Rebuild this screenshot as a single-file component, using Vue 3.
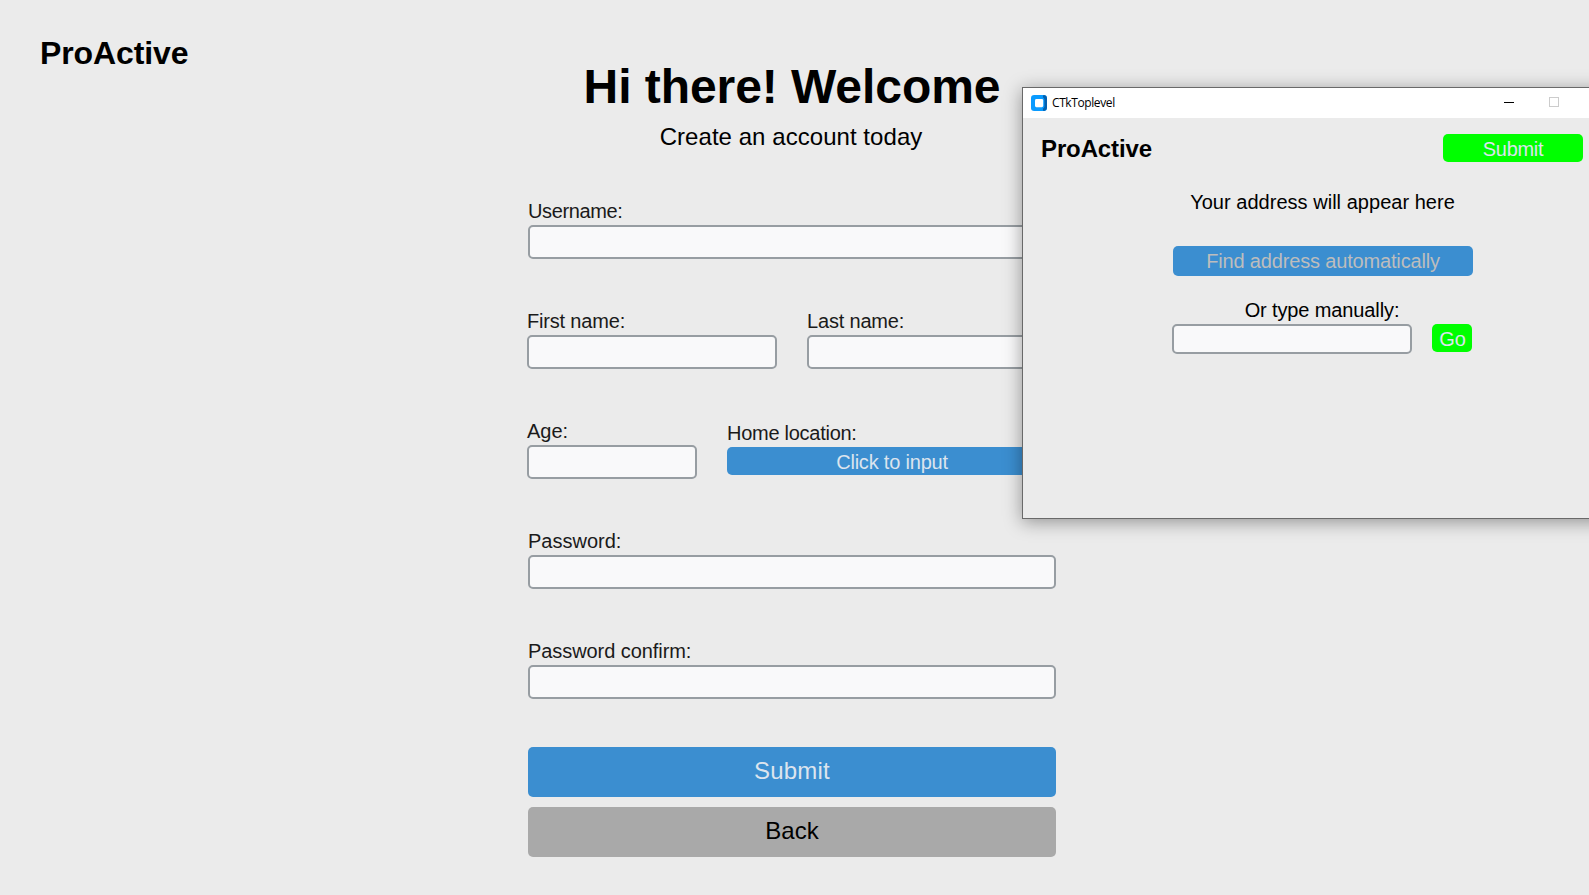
<script setup>
import { ref } from 'vue'

const form = ref({ username: '', first: '', last: '', age: '', password: '', confirm: '' })
const address = ref('')
</script>

<template>
  <div class="app">
    <h2 class="brand">ProActive</h2>

    <main class="panel">
      <h1 class="title">Hi there! Welcome</h1>
      <p class="subtitle">Create an account today</p>

      <form class="form" @submit.prevent>
        <label class="field inset"><span class="label tightest">Username:</span><input v-model="form.username" class="input" type="text" /></label>
        <div class="row">
          <label class="field half"><span class="label tight">First name:</span><input v-model="form.first" class="input" type="text" /></label>
          <label class="field half"><span class="label tight">Last name:</span><input v-model="form.last" class="input" type="text" /></label>
        </div>
        <div class="row">
          <label class="field age"><span class="label">Age:</span><input v-model="form.age" class="input" type="text" /></label>
          <div class="field home">
            <span class="label tighter">Home location:</span>
            <button class="btn blue click" type="button">Click to input</button>
          </div>
        </div>
        <label class="field inset"><span class="label">Password:</span><input v-model="form.password" class="input" type="password" /></label>
        <label class="field inset"><span class="label confirm">Password confirm:</span><input v-model="form.confirm" class="input" type="password" /></label>
        <div class="actions">
          <button class="btn blue large wide" type="submit">Submit</button>
          <button class="btn grey large" type="button">Back</button>
        </div>
      </form>
    </main>

    <section class="dialog">
      <header class="titlebar">
        <svg class="logo" width="16" height="16" viewBox="0 0 16 16">
          <rect width="16" height="16" rx="3.2" fill="#0a9bff" />
          <path d="M12.4 0C14.6 0 16 1.5 16 3.5V12.5C16 14.5 14.6 16 12.4 16L11.8 14L13.4 12V4L11.8 2Z" fill="#0560ae" />
          <rect x="4" y="4" width="8.2" height="8.2" rx="1.4" fill="#fff" />
        </svg>
        <span class="caption">CTkToplevel</span>
        <svg class="controls" width="55" height="10" viewBox="0 0 55 10">
          <rect x="0" y="5" width="10" height="1" fill="#000" />
          <rect x="45.5" y="0.5" width="9" height="9" fill="none" stroke="#ccc" />
        </svg>
      </header>
      <div class="content">
        <div class="top">
          <h3 class="minibrand">ProActive</h3>
          <button class="btn green submit" type="button">Submit</button>
        </div>
        <p class="message">Your address will appear here</p>
        <button class="btn blue find" type="button">Find address automatically</button>
        <label class="manual" for="address">Or type manually:</label>
        <div class="lookup">
          <input id="address" v-model="address" class="input" type="text" />
          <button class="btn green go" type="button">Go</button>
        </div>
      </div>
    </section>
  </div>
</template>

<style>
body {
  margin: 0;
  background: #ebebeb;
}
</style>

<style scoped>
.app {
  position: relative;
  width: 100%;
  height: 895px;
  overflow: hidden;
  background: #ebebeb;
  color: #000;
  font-family: "Liberation Sans", Arial, sans-serif;
  font-size: 20px;
  white-space: nowrap;
}
.app * {
  box-sizing: border-box;
}
h1, h2, h3, p {
  margin: 0;
}
.brand {
  position: absolute;
  left: 40px;
  top: 33px;
  font-size: 32px;
  line-height: 40px;
  letter-spacing: -0.1px;
}
.panel {
  display: flex;
  flex-direction: column;
  width: 530px;
  margin-left: 527px;
  padding-top: 57px;
}
.title {
  font-size: 48px;
  line-height: 60px;
  letter-spacing: -0.06px;
  text-align: center;
}
.subtitle {
  margin-top: 5px;
  padding-right: 2px;
  font-size: 24px;
  line-height: 30px;
  letter-spacing: 0.05px;
  text-align: center;
}
.form {
  display: flex;
  flex-direction: column;
  gap: 50px;
  margin-top: 47px;
}
.row {
  display: flex;
  gap: 30px;
}
.field {
  display: flex;
  flex-direction: column;
  gap: 2px;
  height: 60px;
}
.inset {
  margin: 0 1px;
}
.half {
  width: 250px;
}
.age {
  width: 170px;
}
.home {
  width: 330px;
  padding-top: 2px;
}
.label {
  font-size: 20px;
  line-height: 24px;
  color: #1a1a1a;
}
.confirm {
  letter-spacing: -0.07px;
}
.tight {
  letter-spacing: -0.18px;
}
.tighter {
  letter-spacing: -0.27px;
}
.tightest {
  letter-spacing: -0.37px;
}
.input {
  display: block;
  width: 100%;
  height: 34px;
  margin: 0;
  padding: 0 8px;
  border: 2px solid #979da2;
  border-radius: 5px;
  background: #f9f9fa;
  font: inherit;
  outline: none;
}
.btn {
  display: block;
  flex: none;
  margin: 0;
  padding: 0;
  border: 0;
  border-radius: 5px;
  font: inherit;
  color: #dce4ee;
  text-align: center;
}
.blue {
  background: #3b8ed0;
}
.grey {
  background: #a9a9a9;
  color: #000;
}
.green {
  background: #00ff00;
}
.click {
  height: 28px;
  padding-top: 2px;
  line-height: 26px;
  letter-spacing: -0.2px;
}
.actions {
  display: flex;
  flex-direction: column;
  gap: 10px;
  margin: -2px 1px 0;
}
.large {
  height: 50px;
  padding-bottom: 2px;
  font-size: 24px;
  line-height: 48px;
}
.wide {
  letter-spacing: 0.2px;
}
.dialog {
  position: absolute;
  left: 1022px;
  top: 87px;
  width: 602px;
  height: 432px;
  border: 1px solid #696969;
  background: #ebebeb;
  box-shadow: 0 3px 17px rgba(0, 0, 0, 0.38);
}
.titlebar {
  display: flex;
  align-items: center;
  height: 30px;
  padding-left: 8px;
  background: #fff;
}
.logo {
  margin-top: -1px;
}
.caption {
  width: 457px;
  padding-left: 5px;
  font-family: "Open Sans", "Noto Sans", sans-serif;
  font-size: 12px;
  line-height: 16px;
  letter-spacing: -0.4px;
}
.controls {
  margin-top: -2px;
}
.content {
  display: flex;
  flex-direction: column;
  align-items: center;
}
.top {
  display: flex;
  justify-content: space-between;
  align-items: flex-start;
  width: 100%;
  margin-top: 16px;
  padding: 0 40px 0 18px;
}
.minibrand {
  font-size: 24px;
  line-height: 30px;
  letter-spacing: -0.12px;
}
.submit {
  width: 140px;
  height: 28px;
  padding-top: 2px;
  line-height: 26px;
  letter-spacing: -0.3px;
}
.message {
  margin-top: 26px;
  padding-right: 1px;
  line-height: 24px;
  letter-spacing: 0.03px;
}
.find {
  width: 300px;
  height: 30px;
  margin-top: 32px;
  line-height: 30px;
  letter-spacing: -0.16px;
  color: #bdbdbd;
}
.manual {
  margin-top: 22px;
  padding-right: 2px;
  line-height: 24px;
  letter-spacing: -0.12px;
}
.lookup {
  display: flex;
  gap: 20px;
  width: 302px;
  margin-top: 2px;
}
.lookup .input {
  width: 240px;
  height: 30px;
}
.go {
  width: 40px;
  height: 28px;
  padding: 2px 0 0 1px;
  line-height: 26px;
}
</style>
